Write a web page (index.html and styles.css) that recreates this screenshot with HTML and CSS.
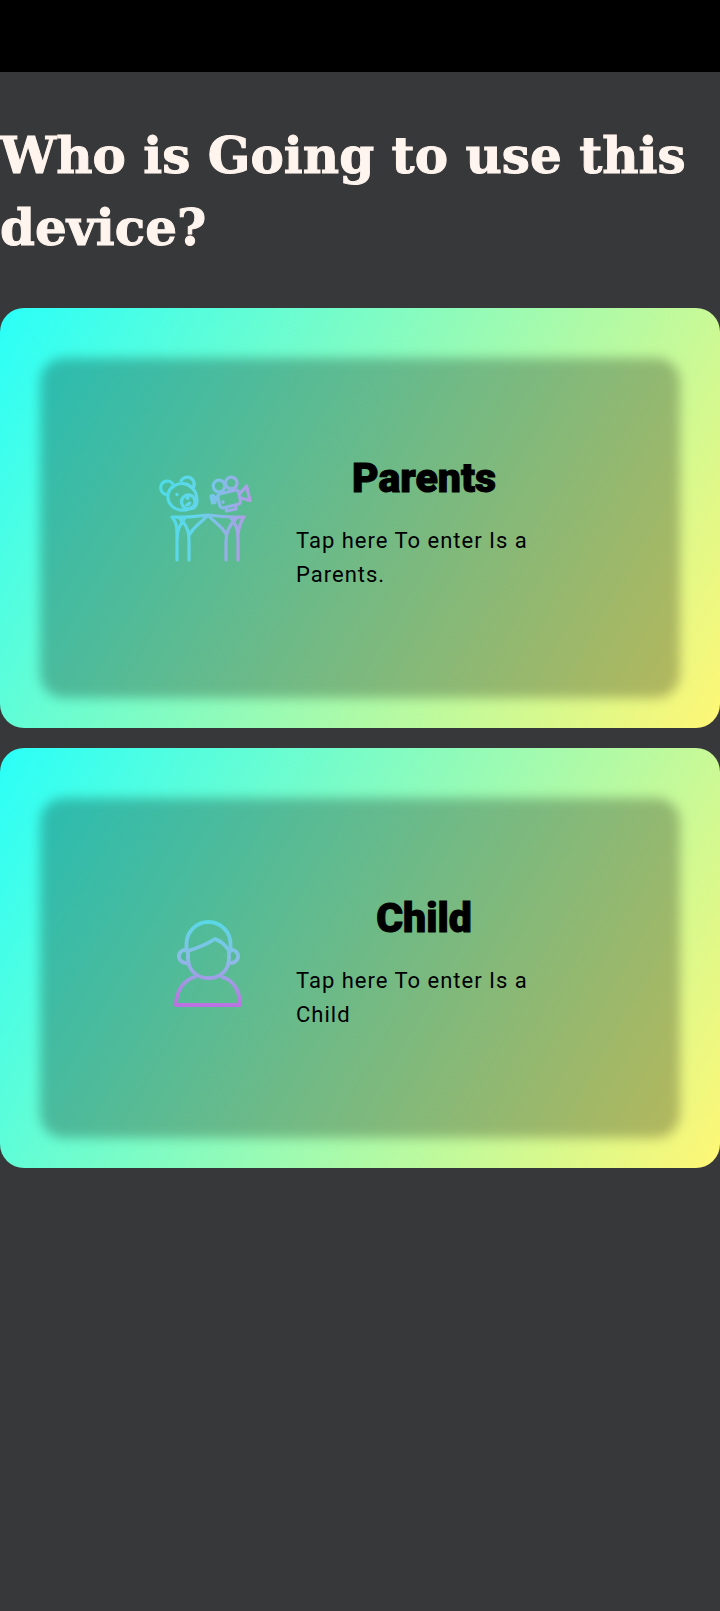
FILE: index.html
```html
<!DOCTYPE html>
<html lang="en">
<head>
<meta charset="utf-8">
<meta name="viewport" content="width=device-width, initial-scale=1">
<title>Choose user</title>
<link rel="stylesheet" href="styles.css">
</head>
<body>
<div class="status-bar"></div>
<main class="screen">
  <h1 class="heading">Who is Going to use this device?</h1>
  <div class="cards">
    <button class="card" type="button">
      <span class="panel">
        <svg class="icon" viewBox="3 3 120 120" aria-hidden="true">
          <defs>
            <linearGradient id="toys" gradientUnits="userSpaceOnUse" x1="14" y1="50" x2="107" y2="62">
              <stop offset="0" stop-color="#4edce8"/>
              <stop offset=".4" stop-color="#62d5ea"/>
              <stop offset="1" stop-color="#b996e6"/>
            </linearGradient>
          </defs>
          <g fill="none" stroke="url(#toys)" stroke-width="3.200" stroke-linecap="round" stroke-linejoin="round">
            <path d="M22.500 38.500A6.700 6.700 0 1 1 28.500 29"/>
            <path d="M36 25A6.700 6.700 0 1 1 48.500 31"/>
            <path d="M47 32C43 27 35 26 29 30C22 34 21 43 26 49C31 55 39 55 44 53C49 53 52 50 52 45C52 40 51 35 47 32Z"/>
            <path d="M36.500 46A6.800 6.800 0 1 1 43 52.500"/>
            <path d="M36.500 45C36.500 49 39 52 42 53" />
            <path d="M74.500 38L91 34Q93 34 93.500 36L95.500 45Q95.500 47 94 48L78 52Q76 52 75 50L72.500 41Q72.500 39 74.500 38Z"/>
            <circle cx="74" cy="30" r="5.800"/>
            <circle cx="86.300" cy="27" r="5.800"/>
            <path d="M73 41L69 42L68.500 39.500L66 40L67.500 47L70 46.500L69.500 44.500L73.500 43.500"/>
            <path d="M94.500 38L101.500 30L105 44.500L96 42M81 52L81.500 55L91 53L90.500 50"/>
            <path d="M27 61C40 62 53 60 63 59C74 60 86 62 99 61M27 61C32 67 32 72 32 80V104M40 62C34 69 32 75 32 84M35 63C43 70 44 77 44 86V104M45 78C49 70 57 66 63 59C69 66 77 70 81 78M91 63C83 70 81 77 81 86V104M86 62C92 69 93 75 93 84V104M93 78C94 71 95 66 99 61"/>
          </g>
          <g fill="url(#toys)">
            <circle cx="32" cy="38.500" r="1.700"/>
            <circle cx="42.500" cy="42" r="2"/>
            <path d="M40 50C40 47 42 48 43 46C45 45 47 46 46 48C45 50 42 51 40 50Z"/>
            <circle cx="78" cy="46" r="1.700"/>
          </g>
        </svg>
        <span class="copy">
          <span class="title">Parents</span>
          <span class="text">Tap here To enter Is a Parents.</span>
        </span>
      </span>
    </button>
    <button class="card" type="button">
      <span class="panel">
        <svg class="icon" viewBox="3 -2 120 120" aria-hidden="true">
          <defs>
            <linearGradient id="person" gradientUnits="userSpaceOnUse" x1="66" y1="20" x2="60" y2="105">
              <stop offset="0" stop-color="#58d8e6"/>
              <stop offset=".45" stop-color="#8dbbe8"/>
              <stop offset="1" stop-color="#bd70e2"/>
            </linearGradient>
          </defs>
          <g fill="none" stroke="url(#person)" stroke-width="3.800" stroke-linecap="round" stroke-linejoin="round">
            <path d="M41.500 50V43A22 22 0 0 1 85.500 43V50"/>
            <path d="M42.500 50C53 47 62 43 70 38C76 40 81 45 84.500 50"/>
            <path d="M43 50V57C43 84 84 84 84 57V50"/>
            <path d="M42 49C31 48 31 63 43 62M85 49C96 48 96 63 84 62"/>
            <path d="M50 76C38 79 31 91 31 104H95C95 91 89 79 77 76"/>
          </g>
        </svg>
        <span class="copy">
          <span class="title">Child</span>
          <span class="text">Tap here To enter Is a Child</span>
        </span>
      </span>
    </button>
  </div>
</main>
</body>
</html>
```
FILE: styles.css
```css
* {
  box-sizing: border-box;
}

body {
  margin: 0;
  min-height: 100vh;
  background: #373839;
  font-family: Roboto, "Liberation Sans", sans-serif;
}

.status-bar {
  height: 72px;
  background: #000;
}

.heading {
  margin: 0;
  padding: 48px 0 44px;
  color: #fff4ee;
  font-family: "DejaVu Serif", serif;
  font-size: 50px;
  font-weight: 700;
  line-height: 72px;
  -webkit-text-stroke: 1px currentColor;
}

.cards {
  display: grid;
  gap: 20px;
}

.card {
  display: block;
  width: 100%;
  padding: 40px;
  border: 0;
  border-radius: 24px;
  background: linear-gradient(120deg, #2afff8, #fff775);
  color: #000;
  font: inherit;
  text-align: left;
  cursor: pointer;
}

.panel {
  position: relative;
  display: grid;
  grid-template-columns: 11fr 16fr;
  align-items: center;
  min-height: 340px;
  padding: 2px 128px 0 80px;
}

/* Soft shade, dropped slightly below the panel */
.panel::before {
  content: "";
  position: absolute;
  inset: 10px 0 -10px;
  border-radius: 24px;
  background: rgba(0, 0, 0, 0.26);
  filter: blur(6px);
}

.icon {
  position: relative;
  justify-self: center;
  width: 120px;
  height: 120px;
}

.copy {
  position: relative;
  display: grid;
  gap: 14px;
}

.title {
  font-size: 41px;
  font-weight: 900;
  line-height: 64px;
  text-align: center;
  -webkit-text-stroke: 1px currentColor;
}

.text {
  font-size: 22px;
  letter-spacing: 1px;
  line-height: 34px;
}
```
